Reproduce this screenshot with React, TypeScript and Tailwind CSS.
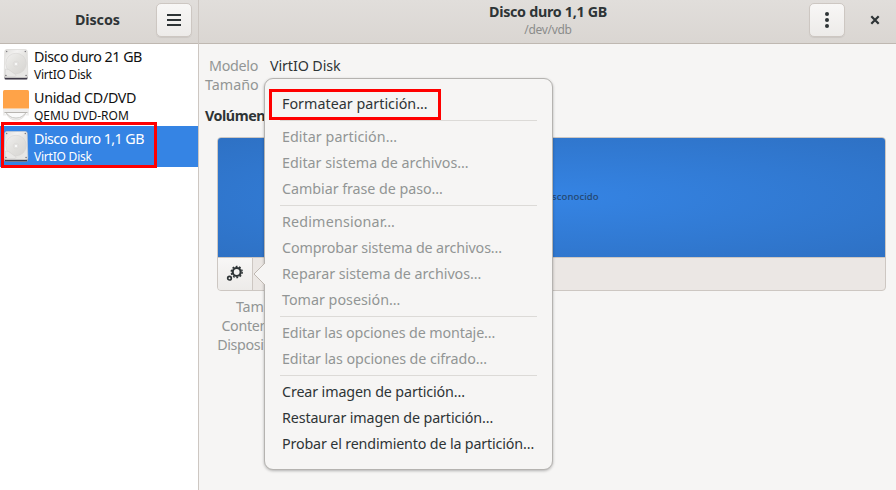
import React from "react";

type Item = { label: string; enabled?: boolean; track?: string };

const groups: Item[][] = [
  [{ label: "Formatear partición…", enabled: true, track: "tracking-[0.02px]" }],
  [
    { label: "Editar partición…", track: "tracking-[0.05px]" },
    { label: "Editar sistema de archivos…" },
    { label: "Cambiar frase de paso…", track: "tracking-[-0.05px]" },
  ],
  [
    { label: "Redimensionar…", track: "tracking-[0.17px]" },
    { label: "Comprobar sistema de archivos…", track: "tracking-[-0.13px]" },
    { label: "Reparar sistema de archivos…", track: "tracking-[-0.04px]" },
    { label: "Tomar posesión…" },
  ],
  [
    { label: "Editar las opciones de montaje…", track: "tracking-[-0.13px]" },
    { label: "Editar las opciones de cifrado…", track: "tracking-[-0.1px]" },
  ],
  [
    { label: "Crear imagen de partición…", enabled: true, track: "tracking-[-0.13px]" },
    { label: "Restaurar imagen de partición…", enabled: true, track: "tracking-[-0.13px]" },
    { label: "Probar el rendimiento de la partición…", enabled: true, track: "tracking-[-0.16px]" },
  ],
];

function DiskIcon() {
  return (
    <svg width="26" height="32" viewBox="0 0 26 32" className="block">
      <defs>
        <linearGradient id="diskFace" x1="0" y1="0" x2="1" y2="1">
          <stop offset="0" stopColor="#deddda" />
          <stop offset="0.3" stopColor="#f3f2f1" />
          <stop offset="0.55" stopColor="#e4e3e0" />
          <stop offset="1" stopColor="#e9e8e6" />
        </linearGradient>
        <linearGradient id="platter" x1="0" y1="0" x2="1" y2="1">
          <stop offset="0" stopColor="#f1f0ef" />
          <stop offset="0.45" stopColor="#e3e2df" />
          <stop offset="1" stopColor="#d6d4d1" />
        </linearGradient>
      </defs>
      <path d="M1 27h24v2q0 1.800-2 1.800H3q-2 0-2-1.800z" fill="#a5a3a8" />
      <path d="M2 28.500h22v1.800H2z" fill="#3d3846" />
      <path d="M3.500 0.500h19q1.600 0 1.700 2l.6 24.500q0 1.500-2 1.500H3.200q-2 0-2-1.500l.6-24.500q.1-2 1.700-2z" fill="url(#diskFace)" stroke="#d3d1ce" strokeWidth=".6" />
      <circle cx="13" cy="14.500" r="10.300" fill="url(#platter)" stroke="#d3d1ce" strokeWidth=".5" />
      <circle cx="13" cy="15" r="2.800" fill="#e3e2e0" stroke="#d6d4d1" strokeWidth=".4" />
      <circle cx="13" cy="15" r="1" fill="#fff" />
      <path d="M2.500 20l3 .5 7 5q1 1.500-.5 2.200H2.300z" fill="#e9e8e6" stroke="#cfcdca" strokeWidth=".5" />
      <g fill="#77757a">
        <circle cx="3.700" cy="2.500" r=".7" />
        <circle cx="22.300" cy="2.500" r=".7" />
        <circle cx="2.900" cy="26.500" r=".8" />
        <circle cx="23.100" cy="26.500" r=".8" />
      </g>
    </svg>
  );
}

function OpticalIcon() {
  return (
    <svg width="26" height="32" viewBox="0 0 26 32" className="block">
      <path d="M3.500 24q3 6 9.500 6t9.500-6z" fill="#f3f2f1" stroke="#d8d6d3" strokeWidth=".7" />
      <path d="M0 18.500h26v7h-3.500L24 23H2l1.500 2.500H0z" fill="#eeedec" />
      <path d="M2.500 22.500h21l-4.500 4q-2 1.500-6 1.500t-6-1.500z" fill="#fafafa" stroke="#c0bfbc" strokeWidth=".9" />
      <path d="M1.500 22.500h23" stroke="#b8b5b1" />
      <path d="M0 1.500q0-1.500 1.500-1.500h23q1.500 0 1.500 1.500v17H0z" fill="#ffa348" />
    </svg>
  );
}

type Drive = {
  name: string;
  model: string;
  nameTrack: string;
  modelTrack: string;
  optical?: boolean;
  active?: boolean;
};

function DriveRow({ name, model, nameTrack, modelTrack, optical, active }: Drive) {
  return (
    <div className={`flex h-[41px] pl-[3px] ${active ? "bg-[#3584e4] text-white" : "text-[#111]"}`}>
      <div className="mt-[5px] w-[26px]">{optical ? <OpticalIcon /> : <DiskIcon />}</div>
      <div className="ml-[5px] pt-[3px] whitespace-nowrap">
        <div className={`h-[19px] text-[14.300px] leading-[20px] ${nameTrack}`}>{name}</div>
        <div className={`text-[12px] leading-[17px] ${modelTrack}`}>{model}</div>
      </div>
    </div>
  );
}

function Gears() {
  return (
    <svg width="18" height="18" viewBox="0 0 18 18" fill="none" stroke="#2e3436">
      <circle cx="10.700" cy="7" r="4" strokeWidth="2.200" />
      <circle cx="10.700" cy="7" r="5.500" strokeWidth="1.400" strokeDasharray="1.900 1.556" />
      <circle cx="3.500" cy="13.200" r="1.800" strokeWidth="1.700" />
    </svg>
  );
}

const button =
  "flex h-[34px] w-[36px] items-center justify-center rounded-[5px] border border-[#cdc7c2] bg-linear-to-b from-[#f8f7f6] to-[#edebe9] shadow-[0_1px_1px_rgba(0,0,0,0.07)]";

function ContextMenu() {
  return (
    <div className="absolute top-[78px] left-[264px] h-[392px] w-[289px] rounded-[9px] border border-[#b5b3b0] bg-[#f6f5f4] pt-[12px] shadow-[0_1px_3px_rgba(0,0,0,0.28)]">
      <svg className="absolute top-[183px] -left-[12px]" width="13" height="24" viewBox="0 0 13 24">
        <path d="M13 0L1 12L13 24z" fill="#f6f5f4" />
        <path d="M12 1L1 12L12 23" fill="none" stroke="#bfb8b1" />
      </svg>
      {groups.map((group, i) => (
        <React.Fragment key={i}>
          {i > 0 && <div className="mr-[15px] mb-[3px] ml-[15px] mt-[3px] h-px bg-[#dcdad7]" />}
          {group.map((item) => (
            <div
              key={item.label}
              className={`h-[26px] pl-[17px] text-[14.300px] leading-[26px] whitespace-nowrap ${item.track ?? ""} ${item.enabled ? "text-[#2e3436]" : "text-[#929595]"}`}
            >
              <span>{item.label}</span>
            </div>
          ))}
        </React.Fragment>
      ))}
      <div className="absolute top-[10px] left-[4px] h-[31px] w-[172px] border-3 border-[#ff0000]" />
    </div>
  );
}

export default function App() {
  return (
    <div className="relative flex h-[490px] w-[896px] overflow-hidden bg-[#f6f5f4] font-['Noto_Sans',sans-serif] text-[14.300px] text-[#2e3436]">
      <aside className="flex w-[199px] flex-col border-r border-[#cdc7c2] bg-white">
        <header className="flex h-[44px] items-center border-b border-[#bfb8b1] bg-linear-to-b from-[#e1dedb] to-[#dad6d2] pr-[6px] pb-[3px]">
          <h1 className="ml-[75px] flex-1 text-[14.300px] font-bold tracking-[-0.1px]">Discos</h1>
          <button className={button}>
            <svg width="14" height="12" viewBox="0 0 14 12" fill="#2e3436">
              <path d="M0 0h14v2H0zM0 5h14v2H0zM0 10h14v2H0z" />
            </svg>
          </button>
        </header>
        <DriveRow name="Disco duro 21 GB" model="VirtIO Disk" nameTrack="tracking-[-0.48px]" modelTrack="tracking-[-0.22px]" />
        <DriveRow name="Unidad CD/DVD" model="QEMU DVD-ROM" nameTrack="tracking-[-0.32px]" modelTrack="tracking-[-0.02px]" optical />
        <DriveRow name="Disco duro 1,1 GB" model="VirtIO Disk" nameTrack="tracking-[-0.56px]" modelTrack="tracking-[-0.22px]" active />
      </aside>
      <main className="flex flex-1 flex-col">
        <header className="flex h-[44px] border-b border-[#bfb8b1] bg-linear-to-b from-[#e1dedb] to-[#dad6d2] pt-[3px]">
          <div className="ml-[89px] w-[520px] text-center">
            <h1 className="text-[14.300px] leading-[18px] font-bold tracking-[-0.3px]">Disco duro 1,1 GB</h1>
            <p className="text-[12px] leading-[17px] tracking-[-0.3px] text-[#8b8c8b]">/dev/vdb</p>
          </div>
          <button className={`${button} ml-[1px]`}>
            <svg width="4" height="16" viewBox="0 0 4 16" fill="#2e3436">
              <circle cx="2" cy="2" r="2" />
              <circle cx="2" cy="8" r="2" />
              <circle cx="2" cy="14" r="2" />
            </svg>
          </button>
          <button className="ml-[25px] flex h-[34px] w-[10px] items-center justify-center">
            <svg width="10" height="10" viewBox="0 0 10 10" stroke="#2e3436" strokeWidth="2.200">
              <path d="M1.300 1.300l7.400 7.400M8.700 1.300L1.300 8.700" />
            </svg>
          </button>
        </header>
        <section className="flex flex-1 flex-col pr-[10px] pl-[6px]">
          <dl className="mt-[12px] grid grid-cols-[53px_1fr] gap-x-[12px] leading-[19px]">
            <dt className="text-right tracking-[-0.3px] text-[#929595]">Modelo</dt>
            <dd className="tracking-[-0.1px]">VirtIO Disk</dd>
            <dt className="text-right text-[#929595]">Tamaño</dt>
            <dd />
          </dl>
          <h2 className="mt-[12px] h-[20px] leading-[20px] font-bold tracking-[-0.45px]">Volúmenes</h2>
          <div className="mt-[11px] ml-[12px] flex h-[154px] flex-col overflow-hidden rounded-[4px] border border-[#cdc7c2] bg-[#ebe7e4]">
            <div className="flex h-[119px] items-center justify-center bg-[radial-gradient(farthest-corner_at_50%_50%,#3584e4,#2e71c4)] text-[9.500px] font-medium text-[#24466f]">
              <span className="ml-[3px] tracking-[0.1px]">1,1 GB Desconocido</span>
            </div>
            <div className="flex flex-1 border-t border-[#cdc7c2]">
              <button className="flex w-[35px] items-center justify-center border-r border-[#cdc7c2] bg-linear-to-b from-[#f8f7f6] to-[#edebe9]">
                <Gears />
              </button>
            </div>
          </div>
          <dl className="mt-[6px] w-[85px] text-right leading-[19px] text-[#929595]">
            <dt className="pr-[1px] tracking-[-0.1px]">Tamaño</dt>
            <dt className="pr-[2px] tracking-[-0.35px]">Contenido</dt>
            <dt className="pr-[3px] tracking-[-0.35px]">Dispositivo</dt>
          </dl>
        </section>
      </main>
      <ContextMenu />
      <div className="absolute top-[122px] left-px h-[46px] w-[156px] border-3 border-[#ff0000]" />
    </div>
  );
}
